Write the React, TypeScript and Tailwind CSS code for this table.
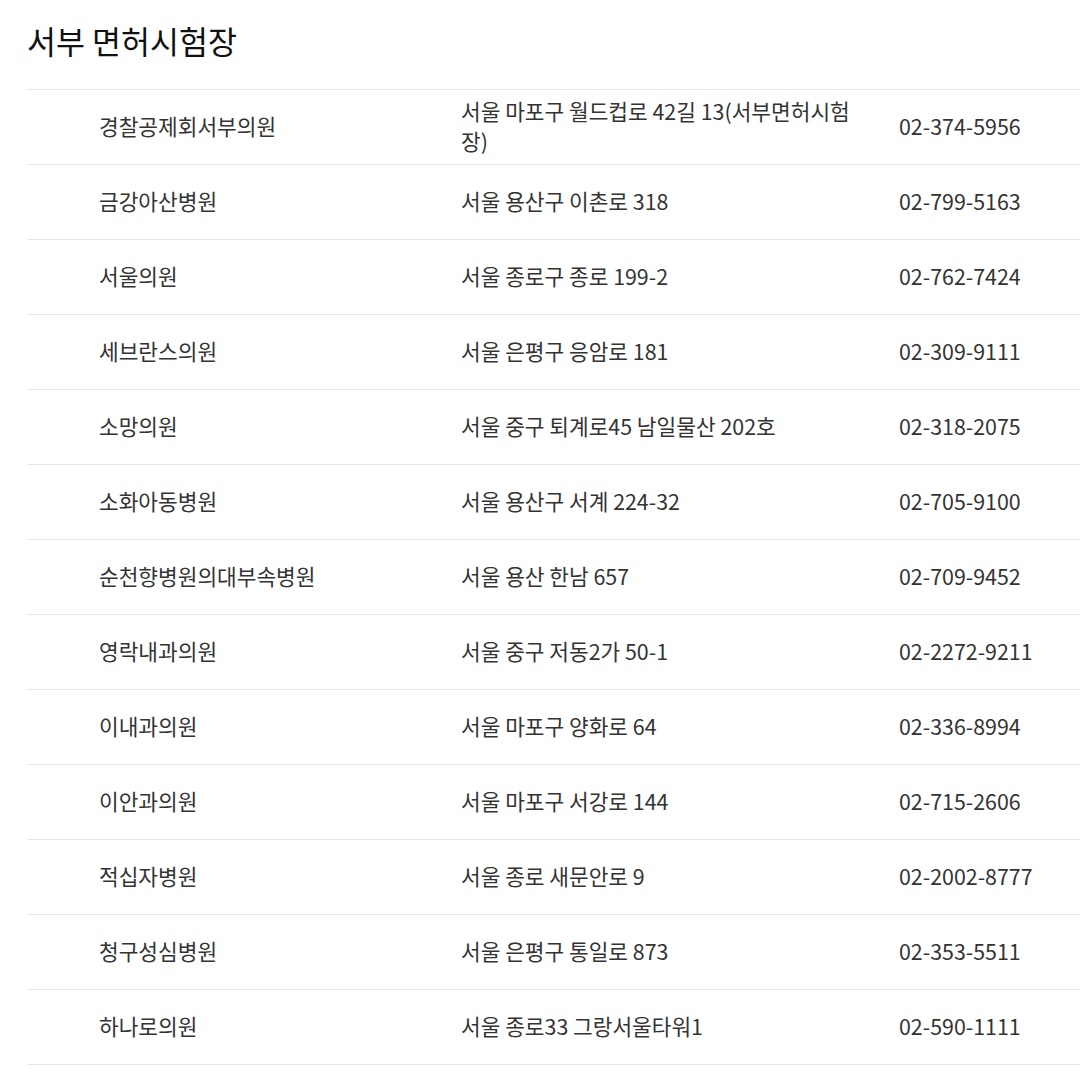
import React from 'react';

const rows = [
  { name: '경찰공제회서부의원', address: '서울 마포구 월드컵로 42길 13(서부면허시험장)', phone: '02-374-5956' },
  { name: '금강아산병원', address: '서울 용산구 이촌로 318', phone: '02-799-5163' },
  { name: '서울의원', address: '서울 종로구 종로 199-2', phone: '02-762-7424' },
  { name: '세브란스의원', address: '서울 은평구 응암로 181', phone: '02-309-9111' },
  { name: '소망의원', address: '서울 중구 퇴계로45 남일물산 202호', phone: '02-318-2075' },
  { name: '소화아동병원', address: '서울 용산구 서계 224-32', phone: '02-705-9100' },
  { name: '순천향병원의대부속병원', address: '서울 용산 한남 657', phone: '02-709-9452' },
  { name: '영락내과의원', address: '서울 중구 저동2가 50-1', phone: '02-2272-9211' },
  { name: '이내과의원', address: '서울 마포구 양화로 64', phone: '02-336-8994' },
  { name: '이안과의원', address: '서울 마포구 서강로 144', phone: '02-715-2606' },
  { name: '적십자병원', address: '서울 종로 새문안로 9', phone: '02-2002-8777' },
  { name: '청구성심병원', address: '서울 은평구 통일로 873', phone: '02-353-5511' },
  { name: '하나로의원', address: '서울 종로33 그랑서울타워1', phone: '02-590-1111' },
];

export default function App() {
  return (
    <div className="bg-white w-[1080px] min-h-[1072px] overflow-hidden pl-[27px] pt-[18px] font-['Noto_Sans_CJK_KR','Noto_Sans',sans-serif]">
      {/* Title */}
      <h2 className="text-[31.5px] leading-[44px] text-[#111] font-normal mb-[27px]">서부 면허시험장</h2>

      {/* Hospital table */}
      <div className="w-[1200px] border-t border-[#e6e6e6]">
        {rows.map((row, index) => (
          <div key={index} className="flex items-center h-[75px] pb-[2px] border-b border-[#e6e6e6] text-[21.4px] leading-[30px] text-[#333]">
            <div className="w-[434px] pl-[72px] shrink-0">{row.name}</div>
            <div className="w-[438px] pr-[36px] shrink-0">{row.address}</div>
            <div className="flex-1">{row.phone}</div>
          </div>
        ))}
      </div>
    </div>
  );
}
